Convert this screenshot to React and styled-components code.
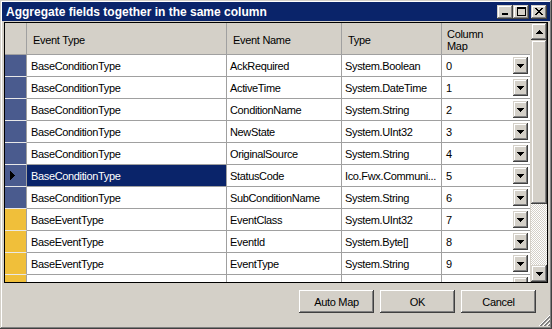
import React from 'react';
import styled, { createGlobalStyle, css } from 'styled-components';

const Global = createGlobalStyle`
  html, body { margin: 0; padding: 0; background: #D4D0C8; }
  body { font-family: "Liberation Sans", Arial, sans-serif; }
  * { box-sizing: border-box; }
`;

const frameRaised = css`
  background: #D4D0C8;
  box-shadow: inset -1px -1px #404040, inset 1px 1px #D4D0C8,
    inset -2px -2px #808080, inset 2px 2px #FFFFFF;
`;

const pushRaised = css`
  background: #D4D0C8;
  box-shadow: inset -1px -1px #404040, inset 1px 1px #FFFFFF,
    inset -2px -2px #808080, inset 2px 2px #D4D0C8;
`;

const Window = styled.div`
  position: relative;
  width: 552px;
  height: 329px;
  padding: 2px;
  display: flex;
  flex-direction: column;
  ${frameRaised};
`;

const TitleBar = styled.div`
  height: 19px;
  flex: none;
  background: #0A246A;
  display: flex;
  align-items: center;
  padding: 0 3px 0 4px;
`;

const TitleText = styled.div`
  color: #fff;
  font-weight: bold;
  font-size: 12px;
  line-height: 19px;
  padding-top: 1px;
  white-space: nowrap;
`;

const CaptionGroup = styled.div`
  margin-left: auto;
  display: flex;
  align-items: center;
`;

const CaptionButton = styled.div`
  width: 16px;
  height: 14px;
  display: flex;
  align-items: center;
  justify-content: center;
  margin-left: ${(p) => (p.$gap ? '2px' : '0')};
  ${frameRaised};
`;

const Body = styled.div`
  padding: 1px 2px 0 2px;
`;

const GridFrame = styled.div`
  height: 261px;
  border: 1px solid #000;
  display: flex;
  background: #fff;
`;

const Table = styled.div`
  flex: 1;
  overflow: hidden;
  display: flex;
  flex-direction: column;
`;

const cols = '22px 200px 115px 100px 89px';

const HeaderRow = styled.div`
  display: grid;
  grid-template-columns: ${cols};
  height: 32px;
  flex: none;
  background: #D4D0C8;
`;

const HeaderCell = styled.div`
  border-right: 1px solid #A0A0A0;
  border-bottom: 1px solid #A0A0A0;
  display: flex;
  align-items: center;
  padding: 2px 0 0 ${(p) => p.$pad || 6}px;
  font-size: 11px;
  letter-spacing: -0.3px;
  line-height: 12px;
  color: #000;
`;

const Row = styled.div`
  display: grid;
  grid-template-columns: ${cols};
  height: 22px;
  flex: none;
`;

const RowHeader = styled.div`
  background: ${(p) => p.$color};
  border-right: 1px solid #A0A0A0;
  border-bottom: 1px solid #E8E8E8;
  display: flex;
  align-items: center;
  padding-left: 5px;
`;

const Cell = styled.div`
  border-right: 1px solid #A0A0A0;
  border-bottom: 1px solid #A0A0A0;
  display: flex;
  align-items: center;
  padding-left: ${(p) => p.$pad || 3}px;
  font-size: 11px;
  letter-spacing: -0.35px;
  white-space: nowrap;
  overflow: hidden;
  background: ${(p) => (p.$selected ? '#0A246A' : '#fff')};
  color: ${(p) => (p.$selected ? '#fff' : '#000')};
`;

const ComboCell = styled(Cell)`
  justify-content: space-between;
  padding-right: 2px;
  padding-left: 4px;
`;

const DropButton = styled.div`
  width: 15px;
  height: 17px;
  flex: none;
  display: flex;
  align-items: center;
  justify-content: center;
  padding-top: 1px;
  ${frameRaised};
`;

const ScrollBar = styled.div`
  width: 17px;
  flex: none;
  display: flex;
  flex-direction: column;
  border-left: 1px solid #D4D0C8;
`;

const ScrollButton = styled.div`
  height: 17px;
  flex: none;
  display: flex;
  align-items: center;
  justify-content: center;
  ${frameRaised};
`;

const Thumb = styled.div`
  height: 164px;
  flex: none;
  ${frameRaised};
`;

const Track = styled.div`
  flex: 1;
  background-color: #fff;
  background-image: repeating-conic-gradient(#D4D0C8 0 25%, #ffffff 0 50%);
  background-size: 2px 2px;
`;

const ButtonRow = styled.div`
  display: flex;
  justify-content: flex-end;
  gap: 6px;
  padding: 7px 14px 0 0;
`;

const PushButton = styled.div`
  width: 75px;
  height: 23px;
  display: flex;
  align-items: center;
  justify-content: center;
  font-size: 11px;
  letter-spacing: -0.3px;
  color: #000;
  ${pushRaised};
`;

const Grip = styled.svg`
  position: absolute;
  right: 2px;
  bottom: 2px;
`;

const ArrowDown = () => (
  <svg width="7" height="4" viewBox="0 0 7 4" shapeRendering="crispEdges">
    <path d="M0 0H7V1H6V2H5V3H4V4H3V3H2V2H1V1H0Z" fill="#000" />
  </svg>
);

const ArrowUp = () => (
  <svg width="7" height="4" viewBox="0 0 7 4" shapeRendering="crispEdges">
    <path d="M0 4H7V3H6V2H5V1H4V0H3V1H2V2H1V3H0Z" fill="#000" />
  </svg>
);

const RowPointer = () => (
  <svg width="5" height="9" viewBox="0 0 5 9" shapeRendering="crispEdges">
    <path d="M0 0H1V1H2V2H3V3H4V4H5V5H4V6H3V7H2V8H1V9H0Z" fill="#000" />
  </svg>
);

const MinGlyph = () => (
  <svg width="8" height="7" viewBox="0 0 8 7" shapeRendering="crispEdges">
    <rect x="1" y="5" width="6" height="2" fill="#000" />
  </svg>
);

const MaxGlyph = () => (
  <svg width="9" height="9" viewBox="0 0 9 9" shapeRendering="crispEdges">
    <path d="M0 0H9V9H0ZM1 2V8H8V2Z" fill="#000" fillRule="evenodd" />
  </svg>
);

const CloseGlyph = () => (
  <svg width="8" height="7" viewBox="0 0 8 7" shapeRendering="crispEdges">
    <path
      d="M0 0H2V1H3V2H5V1H6V0H8V1H7V2H6V3H5V4H6V5H7V6H8V7H6V6H5V5H3V6H2V7H0V6H1V5H2V4H3V3H2V2H1V1H0Z"
      fill="#000"
    />
  </svg>
);

const BLUE = '#4A5B8E';
const YELLOW = '#F0BF3A';

const rows = [
  { c: BLUE, t: 'BaseConditionType', n: 'AckRequired', y: 'System.Boolean', m: '0' },
  { c: BLUE, t: 'BaseConditionType', n: 'ActiveTime', y: 'System.DateTime', m: '1' },
  { c: BLUE, t: 'BaseConditionType', n: 'ConditionName', y: 'System.String', m: '2' },
  { c: BLUE, t: 'BaseConditionType', n: 'NewState', y: 'System.UInt32', m: '3' },
  { c: BLUE, t: 'BaseConditionType', n: 'OriginalSource', y: 'System.String', m: '4' },
  { c: BLUE, t: 'BaseConditionType', n: 'StatusCode', y: 'Ico.Fwx.Communi...', m: '5', sel: true },
  { c: BLUE, t: 'BaseConditionType', n: 'SubConditionName', y: 'System.String', m: '6' },
  { c: YELLOW, t: 'BaseEventType', n: 'EventClass', y: 'System.UInt32', m: '7' },
  { c: YELLOW, t: 'BaseEventType', n: 'EventId', y: 'System.Byte[]', m: '8' },
  { c: YELLOW, t: 'BaseEventType', n: 'EventType', y: 'System.String', m: '9' },
  { c: YELLOW, t: '', n: '', y: '', m: '' },
];

export default function App() {
  return (
    <>
      <Global />
      <Window>
        <TitleBar>
          <TitleText>Aggregate fields together in the same column</TitleText>
          <CaptionGroup>
            <CaptionButton><MinGlyph /></CaptionButton>
            <CaptionButton><MaxGlyph /></CaptionButton>
            <CaptionButton $gap><CloseGlyph /></CaptionButton>
          </CaptionGroup>
        </TitleBar>
        <Body>
          <GridFrame>
            <Table>
              <HeaderRow>
                <HeaderCell />
                <HeaderCell>Event Type</HeaderCell>
                <HeaderCell>Event Name</HeaderCell>
                <HeaderCell>Type</HeaderCell>
                <HeaderCell $pad={5}>Column<br />Map</HeaderCell>
              </HeaderRow>
              {rows.map((r, i) => (
                <Row key={i}>
                  <RowHeader $color={r.c}>{r.sel && <RowPointer />}</RowHeader>
                  <Cell $pad={4} $selected={r.sel}>{r.t}</Cell>
                  <Cell>{r.n}</Cell>
                  <Cell>{r.y}</Cell>
                  <ComboCell>
                    <span>{r.m}</span>
                    <DropButton><ArrowDown /></DropButton>
                  </ComboCell>
                </Row>
              ))}
            </Table>
            <ScrollBar>
              <ScrollButton><ArrowUp /></ScrollButton>
              <Thumb />
              <Track />
              <ScrollButton><ArrowDown /></ScrollButton>
            </ScrollBar>
          </GridFrame>
        </Body>
        <ButtonRow>
          <PushButton>Auto Map</PushButton>
          <PushButton>OK</PushButton>
          <PushButton>Cancel</PushButton>
        </ButtonRow>
        <Grip width="12" height="12" viewBox="0 0 12 12" shapeRendering="crispEdges">
          <g strokeWidth="1">
            <line x1="11.5" y1="0.5" x2="0.5" y2="11.5" stroke="#fff" />
            <line x1="11.5" y1="1.5" x2="1.5" y2="11.5" stroke="#808080" />
            <line x1="11.5" y1="2.5" x2="2.5" y2="11.5" stroke="#808080" />
            <line x1="11.5" y1="4.5" x2="4.5" y2="11.5" stroke="#fff" />
            <line x1="11.5" y1="5.5" x2="5.5" y2="11.5" stroke="#808080" />
            <line x1="11.5" y1="6.5" x2="6.5" y2="11.5" stroke="#808080" />
            <line x1="11.5" y1="8.5" x2="8.5" y2="11.5" stroke="#fff" />
            <line x1="11.5" y1="9.5" x2="9.5" y2="11.5" stroke="#808080" />
            <line x1="11.5" y1="10.5" x2="10.5" y2="11.5" stroke="#808080" />
          </g>
        </Grip>
      </Window>
    </>
  );
}
